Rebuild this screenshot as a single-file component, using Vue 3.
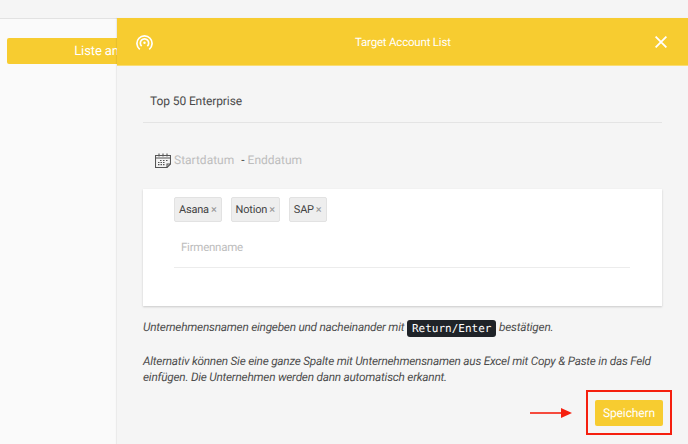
<template>
  <div class="page">
    <div class="topbar"></div>
    <div class="main">
      <aside class="sidebar">
        <button class="create-btn">Liste anlegen</button>
      </aside>

      <section class="panel">
        <header class="panel-head">
          <svg class="signal" width="17" height="17" viewBox="0 0 18 18" fill="none" stroke="#fff" stroke-width="1.8">
            <path d="M4 16.2A8 8 0 1 1 14 16.2" />
            <path d="M6 12.8A4.4 4.4 0 1 1 12 12.8" />
            <circle cx="9" cy="9.2" r="1.3" fill="#fff" stroke="none" />
          </svg>
          <span class="panel-title">Target Account List</span>
          <svg class="close" width="12" height="12" viewBox="0 0 12 12" stroke="#fff" stroke-width="1.8">
            <path d="M0.6 0.6L11.4 11.4M11.4 0.6L0.6 11.4" />
          </svg>
        </header>

        <div class="panel-body">
          <div class="list-name">Top 50 Enterprise</div>

          <div class="dates">
            <svg class="calendar" width="16" height="15" viewBox="0 0 16 15" fill="none" stroke="#555" stroke-width="1.1">
              <path d="M0.5 2.5H15.5V11L12 14.5H0.5Z" />
              <path d="M0.5 5H15.5M4 0.5V3.5M8 0.5V3.5M12 0.5V3.5M12 14.5V11H15.5" />
              <path d="M5 7.5H6.5M8 7.5H9.5M11 7.5H12.5M3 9.5H4.5M5.5 9.5H7M8 9.5H9.5M3 11.7H4.5M5.5 11.7H7M8 11.7H9.5" stroke-width="1.2" />
            </svg>
            <span class="date-ph">Startdatum</span>
            <span class="date-sep">-</span>
            <span class="date-ph">Enddatum</span>
          </div>

          <div class="card">
            <div class="tags">
              <span v-for="tag in tags" :key="tag" class="tag">{{ tag }} <i class="tag-x">×</i></span>
            </div>
            <div class="company-input">Firmenname</div>
          </div>

          <p class="hint first">
            Unternehmensnamen eingeben und nacheinander mit
            <code class="kbd">Return/Enter</code>
            bestätigen.
          </p>
          <p class="hint">
            Alternativ können Sie eine ganze Spalte mit Unternehmensnamen aus Excel mit Copy &amp; Paste in das Feld einfügen. Die Unternehmen werden dann automatisch erkannt.
          </p>

          <div class="actions">
            <svg class="arrow" width="42" height="12" viewBox="0 0 42 12">
              <path d="M0 6H32" stroke="#f5200f" stroke-width="1.6" />
              <path d="M31 1L42 6L31 11Z" fill="#f5200f" />
            </svg>
            <div class="highlight">
              <button class="save-btn">Speichern</button>
            </div>
          </div>
        </div>
      </section>
    </div>
  </div>
</template>

<script setup>
const tags = ['Asana', 'Notion', 'SAP']
</script>

<style>
html,
body {
  margin: 0;
  background: #fafafa;
}
</style>

<style scoped>
.page {
  width: 688px;
  height: 444px;
  overflow: hidden;
  display: flex;
  flex-direction: column;
  font-family: Roboto, "Liberation Sans", sans-serif;
  text-rendering: geometricPrecision;
}

.topbar {
  height: 19px;
  flex: none;
  background: #f5f5f5;
  border-bottom: 1px solid #e2e2e2;
  box-sizing: border-box;
}

.main {
  flex: 1;
  display: flex;
  min-height: 0;
  position: relative;
}

.sidebar {
  width: 117px;
  flex: none;
  background: #fafafa;
  padding: 19px 0 0 7px;
  box-sizing: border-box;
  overflow: visible;
}

.create-btn {
  display: block;
  width: 210px;
  height: 26px;
  border: none;
  border-radius: 2px;
  background: #f7cc30;
  color: #fff;
  font: 13px Roboto, sans-serif;
  letter-spacing: -0.1px;
  text-rendering: geometricPrecision;
  padding: 0;
  text-align: center;
}

.panel {
  position: absolute;
  left: 117px;
  top: -1px;
  right: 0;
  bottom: 0;
  background: #f5f5f5;
  box-shadow: -1px 0 1px rgba(0, 0, 0, 0.06);
  display: flex;
  flex-direction: column;
}

.panel-head {
  height: 48px;
  flex: none;
  background: #f7cc30;
  border-bottom: 1px solid #f9dd74;
  box-sizing: border-box;
  display: flex;
  align-items: center;
  padding: 1px 21px 0 19px;
  position: relative;
  color: #fff;
}

.panel-title {
  position: absolute;
  left: 238px;
  top: 17px;
  font-size: 11.5px;
  letter-spacing: -0.2px;
  line-height: 14px;
}

.close {
  margin-left: auto;
}

.panel-body {
  flex: 1;
  padding: 0 26px;
  min-height: 0;
}

.list-name {
  height: 57px;
  border-bottom: 1px solid #e4e4e4;
  padding: 27px 0 0 7px;
  box-sizing: border-box;
  font-size: 12px;
  letter-spacing: -0.1px;
  line-height: 16px;
  color: #4a4a4a;
}

.dates {
  display: flex;
  align-items: center;
  padding: 30px 0 0 12px;
  height: 14px;
  font-size: 12px;
  line-height: 14px;
  color: #444;
}

.calendar {
  margin-right: 3px;
}

.date-ph {
  color: #bdbdbd;
}

.date-sep {
  margin: 0 3px 0 7px;
}

.card {
  margin-top: 22px;
  height: 117px;
  box-sizing: border-box;
  background: #fff;
  box-shadow: 0 1px 2px rgba(0, 0, 0, 0.18);
  padding: 8px 32px 0 31px;
}

.tags {
  display: flex;
  gap: 9px;
}

.tag {
  height: 25px;
  box-sizing: border-box;
  padding: 0 4px;
  display: flex;
  align-items: center;
  gap: 2px;
  background: #eeeeee;
  border: 1px solid #e2e2e2;
  border-radius: 2px;
  color: #444;
  font-size: 11px;
  letter-spacing: -0.2px;
}

.tag-x {
  font-style: normal;
  color: #999;
  font-size: 11px;
}

.company-input {
  margin-top: 6px;
  height: 40px;
  box-sizing: border-box;
  padding: 12px 0 0 7px;
  border-bottom: 1px solid #ececec;
  color: #bdbdbd;
  font-size: 11.5px;
  letter-spacing: -0.25px;
  line-height: 14px;
}

.hint {
  margin: 16px 0 0;
  font-size: 11.8px;
  letter-spacing: -0.23px;
  line-height: 16px;
  font-style: italic;
  color: #4d4d4d;
}

.hint.first {
  margin-top: 13px;
}

.kbd {
  display: inline-block;
  background: #1f2328;
  color: #fff;
  font: 11px/17px "DejaVu Sans Mono", monospace;
  letter-spacing: 0;
  padding: 0 5px;
  border-radius: 3px;
  font-style: normal;
  vertical-align: -1px;
}

.actions {
  display: flex;
  align-items: center;
  justify-content: flex-end;
  margin-top: 5px;
  margin-right: -10px;
}

.arrow {
  margin-right: 14px;
}

.highlight {
  width: 86px;
  height: 45px;
  box-sizing: border-box;
  border: 2px solid #f5200f;
  display: flex;
  align-items: center;
  justify-content: center;
}

.save-btn {
  width: 68px;
  height: 26px;
  border: none;
  border-radius: 2px;
  background: #f7cc30;
  color: #fff;
  font: 12px Roboto, sans-serif;
  letter-spacing: -0.1px;
  text-rendering: geometricPrecision;
  padding: 0;
}
</style>
